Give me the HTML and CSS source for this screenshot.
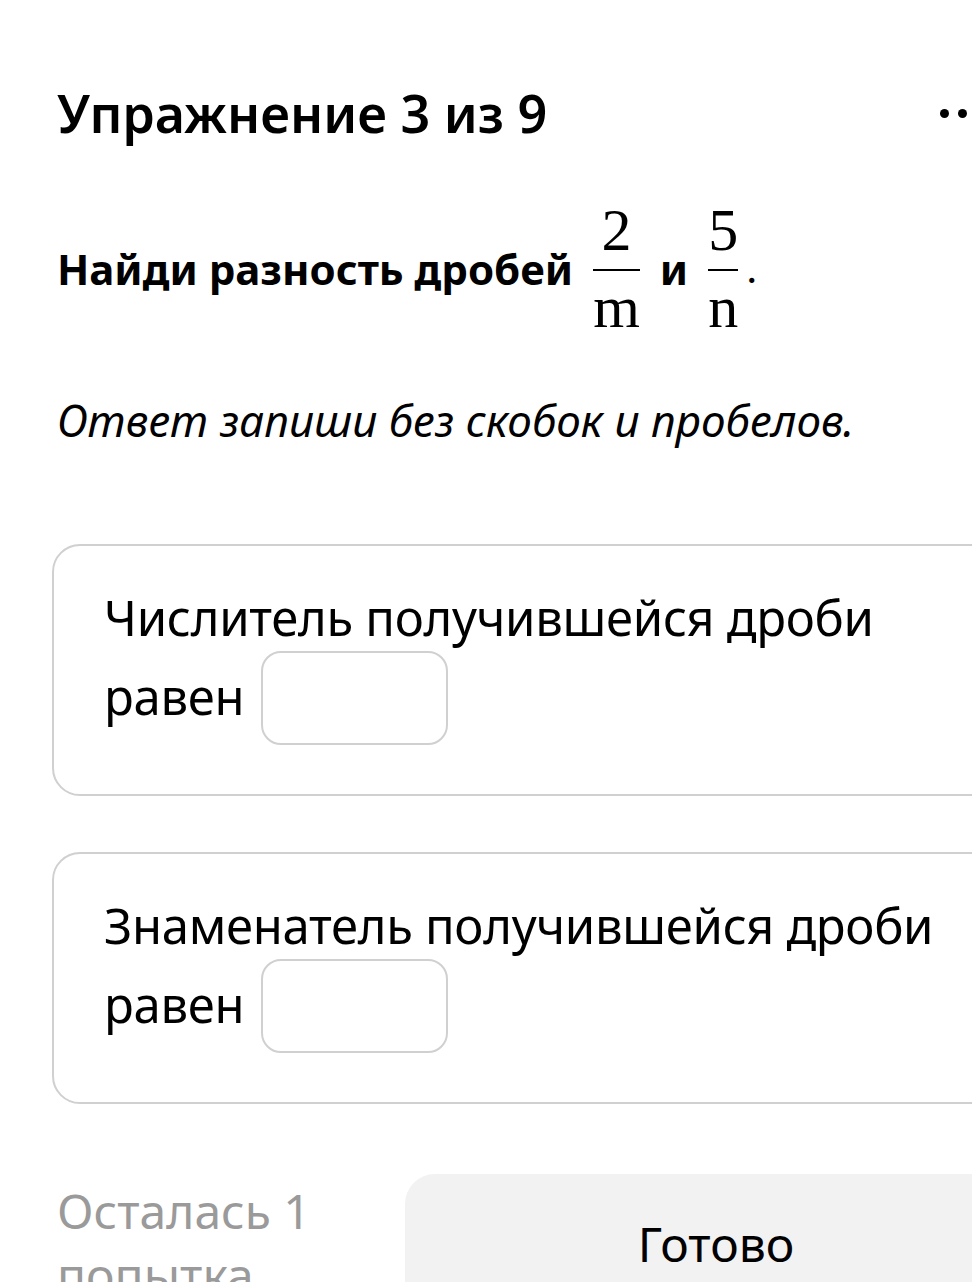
FILE: index.html
```html
<!DOCTYPE html>
<html lang="ru">

<head>
  <meta charset="UTF-8" />
  <meta name="viewport" content="width=device-width, initial-scale=1.0" />
  <title>Упражнение 3 из 9</title>
  <link rel="stylesheet" href="styles.css">
</head>

<body>
  <main class="page">
    <header class="top">
      <h1>Упражнение 3 из 9</h1>
      <span class="menu"><i></i><i></i><i></i></span>
    </header>

    <p class="task">
      Найди разность дробей
      <span class="frac"><span class="num">2</span><span class="den">m</span></span>
      и
      <span class="frac"><span class="num">5</span><span class="den">n</span></span>
      <span class="dot">.</span>
    </p>

    <p class="hint">Ответ запиши без скобок и пробелов.</p>

    <section class="card">
      <p>Числитель получившейся дроби равен <span class="answer"></span></p>
    </section>

    <section class="card">
      <p>Знаменатель получившейся дроби равен <span class="answer"></span></p>
    </section>

    <footer class="bottom">
      <p class="tries">Осталась 1 попытка</p>
      <button class="done">Готово</button>
    </footer>
  </main>
</body>

</html>
```

FILE: styles.css
```css
* {
  margin: 0;
  padding: 0;
  box-sizing: border-box;
}

html,
body {
  background: #fff;
  color: #000;
  font-family: 'Noto Sans', 'Open Sans', sans-serif;
  overflow: hidden;
  height: 100%;
}

.page {
  width: 1080px;
  padding: 0 0 0 52px;
}

.top {
  display: flex;
  justify-content: space-between;
  align-items: center;
  width: 933px;
  padding: 79px 0 0 5px;
}

.top h1 {
  font-size: 52px;
  font-weight: 600;
  line-height: 68px;
}

.menu {
  display: flex;
  gap: 9px;
}

.menu i {
  width: 9px;
  height: 9px;
  border-radius: 50%;
  background: #000;
}

/* task line with two fractions */
.task {
  display: flex;
  align-items: center;
  gap: 20px;
  margin-top: 53px;
  padding-left: 5px;
  font-size: 42px;
  font-weight: 700;
}

.frac {
  display: inline-flex;
  flex-direction: column;
  align-items: stretch;
  text-align: center;
  font-family: 'Liberation Serif', 'DejaVu Serif', serif;
  font-weight: 400;
  font-size: 60px;
  line-height: 60px;
}

.frac .num {
  border-bottom: 2px solid #000;
  padding-bottom: 9px;
}

.frac .den {
  padding-top: 6px;
}

.dot {
  font-family: 'Liberation Serif', 'DejaVu Serif', serif;
  font-weight: 400;
  font-size: 44px;
  margin-left: -12px;
}

.hint {
  margin-top: 53px;
  padding-left: 5px;
  font-size: 44px;
  font-style: italic;
}

.card {
  width: 975px;
  margin-top: 94px;
  border: 2px solid #d0d0d0;
  border-radius: 28px;
  padding: 37px 50px 49px;
}

.card + .card {
  margin-top: 56px;
}

.card p {
  max-width: 840px;
  font-size: 49px;
  line-height: 68px;
  letter-spacing: -0.3px;
}

.answer {
  display: inline-block;
  width: 187px;
  height: 94px;
  border: 2px solid #d0d0d0;
  border-radius: 20px;
  vertical-align: -30px;
  margin-left: 4px;
}

.bottom {
  display: flex;
  gap: 88px;
  width: 975px;
  padding: 70px 0 0 5px;
}

.tries {
  width: 260px;
  padding-top: 5px;
  font-size: 48px;
  line-height: 64px;
  color: #9a9a9a;
}

.done {
  flex: 1;
  height: 138px;
  border: none;
  border-radius: 30px;
  background: #f2f2f2;
  font-family: inherit;
  font-size: 48px;
  color: #000;
}
```
